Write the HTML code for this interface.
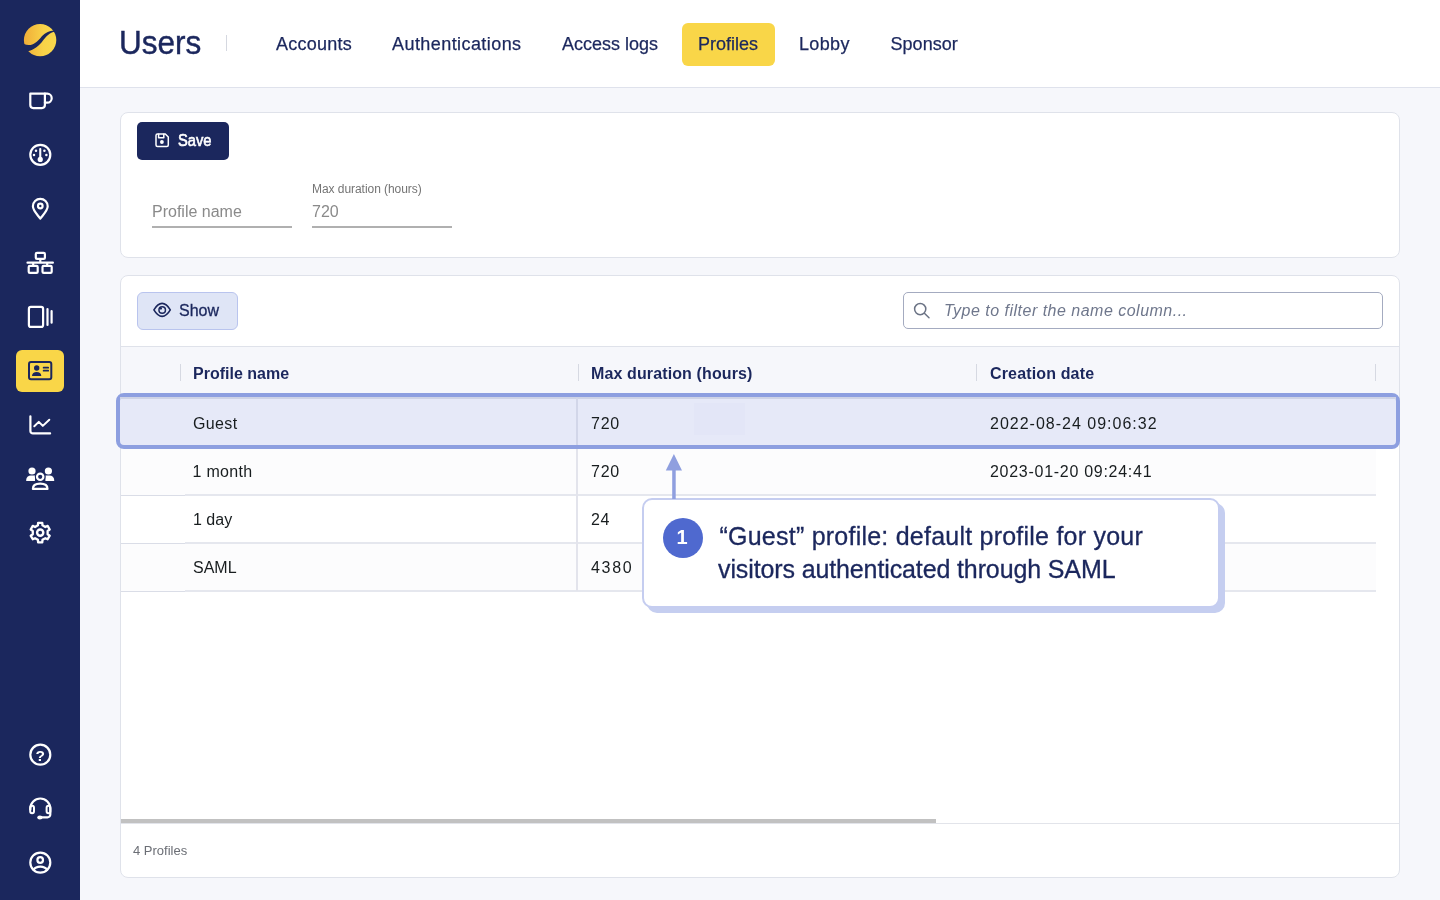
<!DOCTYPE html>
<html lang="en"><head><meta charset="utf-8"><title>Users - Profiles</title>
<style>
*{box-sizing:border-box;margin:0;padding:0}
html,body{width:1440px;height:900px;overflow:hidden}
body{background:#f6f7fb;font-family:"Liberation Sans",sans-serif;color:#1b275d;position:relative}
.abs{position:absolute}
#side{position:absolute;left:0;top:0;width:80px;height:900px;background:#1b275d}
#side svg{position:absolute;left:0;top:0}
#active{position:absolute;left:16px;top:350px;width:48px;height:42px;border-radius:6px;background:#f9d648}
#top{position:absolute;left:80px;top:0;width:1360px;height:88px;background:#fff;border-bottom:1px solid #dfe2ec}
#title{position:absolute;left:119px;top:23px;font-size:33.5px;line-height:40px;color:#1b275d;transform:scaleX(.94);transform-origin:0 0;-webkit-text-stroke:.45px #1b275d}
#sep{position:absolute;left:226px;top:35px;width:1px;height:16px;background:#d5d8e0}
.tab{position:absolute;top:33px;font-size:18px;line-height:22px;color:#1b275d;white-space:nowrap;-webkit-text-stroke:.25px #1b275d}
#ptab{position:absolute;left:682px;top:23px;width:93px;height:43px;border-radius:6px;background:#f9d648}
.card{position:absolute;left:120px;width:1280px;background:#fff;border:1px solid #dfe2ea;border-radius:8px}
#save{position:absolute;left:137px;top:122px;width:92px;height:38px;border-radius:6px;background:#1b275d;color:#fff;font-weight:bold;font-size:16px;line-height:38px;border-radius:5px}
#save span{position:absolute;left:41px;top:0;font-weight:normal;-webkit-text-stroke:.6px #fff;transform:scaleX(.92);transform-origin:0 0}
#show{position:absolute;left:137px;top:292px;width:101px;height:38px;border-radius:6px;background:#dfe5f6;border:1px solid #b9c4ee;color:#1b275d;font-size:16px;line-height:36px;padding-left:41px;-webkit-text-stroke:0.3px #1b275d}
.fl{position:absolute;color:#8a8a8a}
.ul{position:absolute;height:2px;background:#a3a3a3;width:140px;top:226px}
#search{position:absolute;left:903px;top:292px;width:480px;height:37px;border:1px solid #a4abc0;border-radius:5px;background:#fff}
#search span{position:absolute;left:40px;top:8px;font-size:16px;line-height:20px;font-style:italic;color:#6f778c;letter-spacing:.49px}
#thead{position:absolute;left:121px;top:346px;width:1278px;height:50px;background:#f6f7fb;border-top:1px solid #dfe2ea}
.th{position:absolute;top:364px;font-size:16px;line-height:20px;font-weight:bold;color:#1b275d;white-space:nowrap}
.hs{position:absolute;top:364px;width:1px;height:17px;background:#d6d9e2}
.row{position:absolute;left:121px;width:1255px;height:48px;border-bottom:2px solid #e5e7ee;background:#fff}
.pl{position:absolute;left:121px;width:64px;height:2px;border-bottom:1px solid #dadde7}
.row.alt{background:#fcfcfd}
.td{position:absolute;font-size:16px;line-height:20px;color:#181d1f;white-space:nowrap}
#vline{position:absolute;left:576px;top:398px;width:2px;height:193px;background:#e3e4ec}
#sel{position:absolute;left:116px;top:393px;width:1284px;height:56px;border:4px solid #8d9fe0;border-radius:8px;background:#e6e9f8}
#sel i{position:absolute;left:0;top:0;width:100%;height:2px;background:#ced3e6}
#sel b{position:absolute;left:456px;top:1px;width:2px;height:47px;background:#d2d6e9}
#sel u{position:absolute;left:574px;top:6px;width:51px;height:32px;background:#e3e6f7}
#tip{position:absolute;left:642px;top:498px;width:578px;height:110px;border-radius:10px;background:#fff;border:2px solid #c5cdf0;box-shadow:5px 5px 0 0 #c5cef0}
#tip .t{position:absolute;left:74px;top:20px;font-size:25px;line-height:33px;color:#1b275d;white-space:nowrap;-webkit-text-stroke:.3px #1b275d}
#num{position:absolute;left:663px;top:518px;width:40px;height:40px;border-radius:20px;background:#4f69cf;color:#fff;font-weight:bold;font-size:20px;line-height:38px;text-align:center;text-indent:-2px}
#hscroll{position:absolute;left:121px;top:819px;width:815px;height:4px;background:#c1c1c1}
#fline{position:absolute;left:121px;top:823px;width:1278px;height:1px;background:#e2e4ea}
#foot{position:absolute;left:133px;top:843px;font-size:13px;line-height:16px;color:#6b6e75}
#w{position:absolute;left:0;top:0;width:1440px;height:900px;will-change:transform}
</style></head><body><div id="w">
<div id="side"><div id="active"></div><svg id="sb" width="80" height="900" viewBox="0 0 80 900">
<defs><linearGradient id="lg" x1="0" y1="0" x2="1" y2="0"><stop offset="0" stop-color="#f0ad38"/><stop offset="0.6" stop-color="#f8d248"/><stop offset="1" stop-color="#f9d84c"/></linearGradient></defs>
<circle cx="40.1" cy="40.1" r="16.2" fill="url(#lg)"/>
<path d="M54.6 30.6 C47.5 30.8 43.5 34.5 40.5 38 C36.5 42.6 31.5 47.2 23.8 44 L22 47 L28 51.2 C35 49.5 39.5 45.2 42.8 40.8 C46 36.6 49.5 32.8 55.2 31.6 Z" fill="#1b275d"/>
<g fill="none" stroke="#fff" stroke-width="2.2" stroke-linecap="round" stroke-linejoin="round">
<!-- mug -->
<path d="M30.3 93.7 H44.9 V105.1 a3 3 0 0 1 -3 3 H33.3 a3 3 0 0 1 -3 -3 Z"/>
<path d="M44.9 93.7 H47.2 a4.5 4.5 0 0 1 0 9 H44.9"/>
<!-- gauge -->
<circle cx="40.3" cy="154.8" r="10"/>
<!-- pin -->
<path d="M40.3 198.9 a7.4 7.4 0 0 1 7.4 7.4 c0 4.2 -4.6 8.6 -7.4 12.4 c-2.8 -3.8 -7.4 -8.2 -7.4 -12.4 a7.4 7.4 0 0 1 7.4 -7.4 z"/>
<circle cx="40.3" cy="206" r="2.3"/>
<!-- network -->
<rect x="35.8" y="252.9" width="9.1" height="6" rx="1.2"/>
<rect x="28.7" y="265.9" width="9" height="7" rx="1.2"/>
<rect x="42.5" y="265.9" width="9.2" height="7" rx="1.2"/>
<path d="M27.5 262.7 H52.9 M40.3 259.5 V262.5 M33.2 263 V265.5 M47.2 263 V265.5"/>
<!-- tablet -->
<rect x="28.9" y="306.9" width="14.2" height="20" rx="2"/>
<path d="M47.5 309.1 V324.9 M51.6 311.1 V322.7"/>
<!-- chart -->
<path d="M30.4 416.3 V430.9 a2.5 2.5 0 0 0 2.5 2.5 H50.1"/>
<path d="M34.3 426.3 L38.8 421.9 L42.8 425.9 L49.3 419.7" stroke-width="2"/>
<!-- gear -->
<path d="M37.93 525.35 L38.12 522.82 L42.28 522.82 L42.47 525.35 L45.34 527.01 L47.63 525.91 L49.71 529.51 L47.62 530.94 L47.62 534.26 L49.71 535.69 L47.63 539.29 L45.34 538.19 L42.47 539.85 L42.28 542.38 L38.12 542.38 L37.93 539.85 L35.06 538.19 L32.77 539.29 L30.69 535.69 L32.78 534.26 L32.78 530.94 L30.69 529.51 L32.77 525.91 L35.06 527.01Z" stroke-width="2.3"/>
<circle cx="40.2" cy="532.6" r="3.1" stroke-width="2.4"/>
<!-- help -->
<circle cx="40.3" cy="754.7" r="10"/>
<!-- headset -->
<path d="M30.3 809.5 V808.5 a10 10 0 0 1 20 0 V814.5 a2.8 2.8 0 0 1 -2.8 2.8 H42"/>
<rect x="30.2" y="805.8" width="3.8" height="7.4" rx="1.9" stroke-width="2"/>
<rect x="46.6" y="805.8" width="3.8" height="7.4" rx="1.9" stroke-width="2"/>
<!-- user -->
<circle cx="40.3" cy="862.6" r="10"/>
<circle cx="40.2" cy="860" r="2.8"/>
<path d="M33.5 869.9 C35 867.6 37.4 866.7 40.3 866.7 C43.2 866.7 45.6 867.6 47.1 869.9"/>
</g>
<g fill="#fff">
<!-- gauge needle/dots -->
<rect x="39.2" y="148" width="2.1" height="11" rx="1"/>
<circle cx="40.25" cy="159.4" r="2.6"/>
<circle cx="36" cy="150.8" r="1.25"/><circle cx="44.4" cy="150.8" r="1.25"/><circle cx="34" cy="154.9" r="1.25"/><circle cx="46.4" cy="154.9" r="1.25"/>
<!-- users -->
<circle cx="32" cy="471" r="3.6"/><circle cx="48.4" cy="471" r="3.6"/>
<path d="M26.2 481 V480 a4.6 4.6 0 0 1 4.6 -4.6 H35 V481 Z"/>
<path d="M54.2 481 V480 a4.6 4.6 0 0 0 -4.6 -4.6 H45.4 V481 Z"/>
<circle cx="40.2" cy="476.8" r="5.4" fill="#1b275d"/>
<ellipse cx="39.9" cy="817.5" rx="2.7" ry="1.9"/>
</g>
<g fill="none" stroke="#fff" stroke-width="2.2" stroke-linecap="round" stroke-linejoin="round">
<circle cx="40.2" cy="476.8" r="3.2"/>
<path d="M32.9 488.9 C32.9 485.5 36 483.7 40.2 483.7 C44.4 483.7 47.5 485.5 47.5 488.9 Z"/>
</g>
<text x="40.3" y="760.6" text-anchor="middle" font-family="Liberation Sans, sans-serif" font-weight="bold" font-size="15.5" fill="#fff">?</text>
<!-- active id card -->
<g fill="none" stroke="#1b275d" stroke-width="2" stroke-linejoin="round" stroke-linecap="round">
<rect x="29" y="362" width="22.3" height="17.3" rx="2"/>
<path d="M43.6 367.7 H48.2 M43.6 370.7 H48.2" stroke-width="1.7"/>
</g>
<g fill="#1b275d"><circle cx="36.7" cy="368" r="2.7"/><path d="M32 376 C32 373.5 34 372 36.65 372 C39.3 372 41.3 373.5 41.3 376 Z"/></g>
</svg></div>
<div id="top"></div>
<div id="title">Users</div><div id="sep"></div>
<div id="ptab"></div>
<div class="tab" style="left:276px;letter-spacing:.25px">Accounts</div>
<div class="tab" style="left:392px;letter-spacing:.43px">Authentications</div>
<div class="tab" style="left:562px">Access logs</div>
<div class="tab" style="left:698px">Profiles</div>
<div class="tab" style="left:799px;letter-spacing:.35px">Lobby</div>
<div class="tab" style="left:890.5px;letter-spacing:.05px">Sponsor</div>

<div class="card" style="top:112px;height:146px"></div>
<div id="save"><span>Save</span></div>
<div class="fl" style="left:152px;top:202px;font-size:16px;line-height:20px">Profile name</div>
<div class="fl" style="left:312px;top:182px;font-size:12px;line-height:14px;color:#747474;letter-spacing:-0.05px">Max duration (hours)</div>
<div class="fl" style="left:312px;top:202px;font-size:16px;line-height:20px">720</div>


<div class="card" style="top:275px;height:603px"></div>
<div id="show">Show</div>
<div id="search"><span>Type to filter the name column...</span></div>
<div id="thead"></div>
<div class="hs" style="left:180px"></div><div class="hs" style="left:578px"></div><div class="hs" style="left:976px"></div><div class="hs" style="left:1375px"></div>
<div class="th" style="left:193px">Profile name</div>
<div class="th" style="left:591px;letter-spacing:.12px">Max duration (hours)</div>
<div class="th" style="left:990px;letter-spacing:.15px">Creation date</div>

<div class="row alt" style="top:448px"></div>
<div class="row" style="top:496px"></div>
<div class="row alt" style="top:544px"></div>
<div class="pl" style="top:494px;background:#fcfcfd"></div><div class="pl" style="top:542px;background:#fff"></div><div class="pl" style="top:590px;background:#fcfcfd"></div>
<div id="vline"></div>
<div id="sel"><i></i><b></b><u></u></div>
<div class="td" style="left:193px;top:414px;letter-spacing:.35px">Guest</div><div class="td" style="left:591px;top:414px;letter-spacing:.75px">720</div><div class="td" style="left:990px;top:414px;letter-spacing:1px">2022-08-24 09:06:32</div>
<div class="td" style="left:192.5px;top:462px;letter-spacing:.3px">1 month</div><div class="td" style="left:591px;top:462px;letter-spacing:.75px">720</div><div class="td" style="left:990px;top:462px;letter-spacing:.72px">2023-01-20 09:24:41</div>
<div class="td" style="left:193px;top:510px">1 day</div><div class="td" style="left:591px;top:510px;letter-spacing:.6px">24</div>
<div class="td" style="left:193px;top:558px">SAML</div><div class="td" style="left:591px;top:558px;letter-spacing:1.7px">4380</div>

<div id="tip"><div class="t"><span style="letter-spacing:.23px;margin-left:1.5px">“Guest” profile: default profile for your</span><br><span style="letter-spacing:-.12px">visitors authenticated through SAML</span></div></div>
<div id="num">1</div>
<svg id="ov" width="1440" height="900" viewBox="0 0 1440 900" style="position:absolute;left:0;top:0;pointer-events:none">
<!-- save icon -->
<g fill="none" stroke="#fff" stroke-width="1.5" stroke-linejoin="round" stroke-linecap="round">
<path d="M157.5 134 H165.3 L168.3 137 V144.9 a1.5 1.5 0 0 1 -1.5 1.5 H157.5 a1.5 1.5 0 0 1 -1.5 -1.5 V135.5 a1.5 1.5 0 0 1 1.5 -1.5 Z"/>
<path d="M158.6 134.2 V137.8 H163.8 V134.2"/>
</g>
<circle cx="161.9" cy="142" r="1.9" fill="#fff"/>
<!-- eye -->
<g fill="none" stroke="#1b275d" stroke-width="1.6" stroke-linejoin="round" stroke-linecap="round">
<path d="M153.9 309.9 C156.5 305.5 159.3 303.4 162.1 303.4 C164.9 303.4 167.7 305.5 170.3 309.9 C167.7 314.3 164.9 316.4 162.1 316.4 C159.3 316.4 156.5 314.3 153.9 309.9 Z"/>
<circle cx="162.2" cy="309.9" r="3.25" stroke-width="1.5"/>
</g>
<circle cx="160.9" cy="308.6" r="1.15" fill="#1b275d"/>
<!-- search -->
<g fill="none" stroke="#6b7385" stroke-width="1.5" stroke-linecap="round">
<circle cx="920.2" cy="309.1" r="5.6"/><path d="M924.4 313.3 L929 317.7"/>
</g>
<path d="M152 227 H292 M312 227 H452" stroke="#979797" stroke-width="1.6" fill="none"/>
<!-- arrow -->
<path d="M673.9 454 L682 470.6 H675.7 V499 H672.2 V470.6 H665.8 Z" fill="#8f9fdf"/>
</svg>
<div id="hscroll"></div><div id="fline"></div>
<div id="foot">4 Profiles</div>
</div></body></html>
